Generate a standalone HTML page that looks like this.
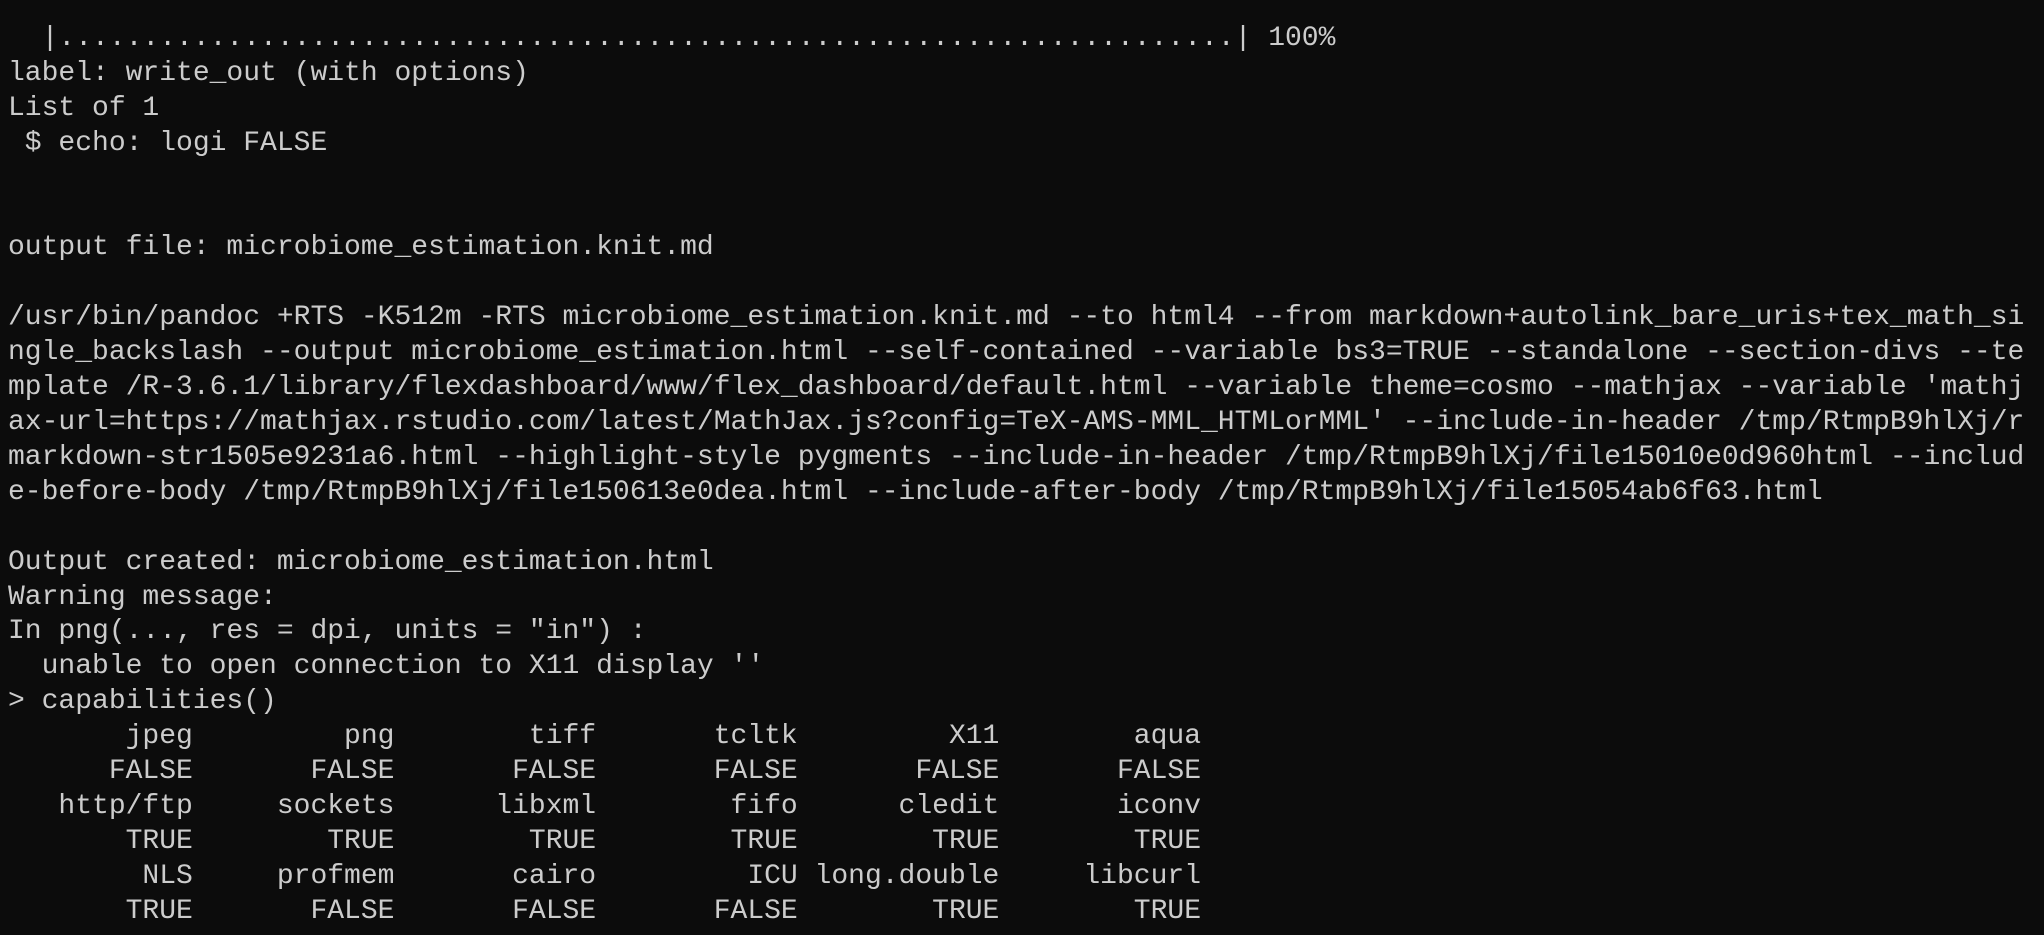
<!DOCTYPE html>
<html><head><meta charset="utf-8"><style>
html,body{margin:0;padding:0;background:#0c0c0c;width:2044px;height:935px;overflow:hidden}
pre{margin:0;position:absolute;left:8px;top:22px;font-family:"Liberation Mono","DejaVu Sans Mono",monospace;font-size:28px;line-height:34.9px;color:#cccccc;letter-spacing:0}
</style></head><body><pre>  |......................................................................| 100%
label: write_out (with options)
List of 1
 $ echo: logi FALSE


output file: microbiome_estimation.knit.md

/usr/bin/pandoc +RTS -K512m -RTS microbiome_estimation.knit.md --to html4 --from markdown+autolink_bare_uris+tex_math_si
ngle_backslash --output microbiome_estimation.html --self-contained --variable bs3=TRUE --standalone --section-divs --te
mplate /R-3.6.1/library/flexdashboard/www/flex_dashboard/default.html --variable theme=cosmo --mathjax --variable 'mathj
ax-url=https://mathjax.rstudio.com/latest/MathJax.js?config=TeX-AMS-MML_HTMLorMML' --include-in-header /tmp/RtmpB9hlXj/r
markdown-str1505e9231a6.html --highlight-style pygments --include-in-header /tmp/RtmpB9hlXj/file15010e0d960html --includ
e-before-body /tmp/RtmpB9hlXj/file150613e0dea.html --include-after-body /tmp/RtmpB9hlXj/file15054ab6f63.html

Output created: microbiome_estimation.html
Warning message:
In png(..., res = dpi, units = "in") :
  unable to open connection to X11 display ''
&gt; capabilities()
       jpeg         png        tiff       tcltk         X11        aqua
      FALSE       FALSE       FALSE       FALSE       FALSE       FALSE
   http/ftp     sockets      libxml        fifo      cledit       iconv
       TRUE        TRUE        TRUE        TRUE        TRUE        TRUE
        NLS     profmem       cairo         ICU long.double     libcurl
       TRUE       FALSE       FALSE       FALSE        TRUE        TRUE</pre></body></html>
